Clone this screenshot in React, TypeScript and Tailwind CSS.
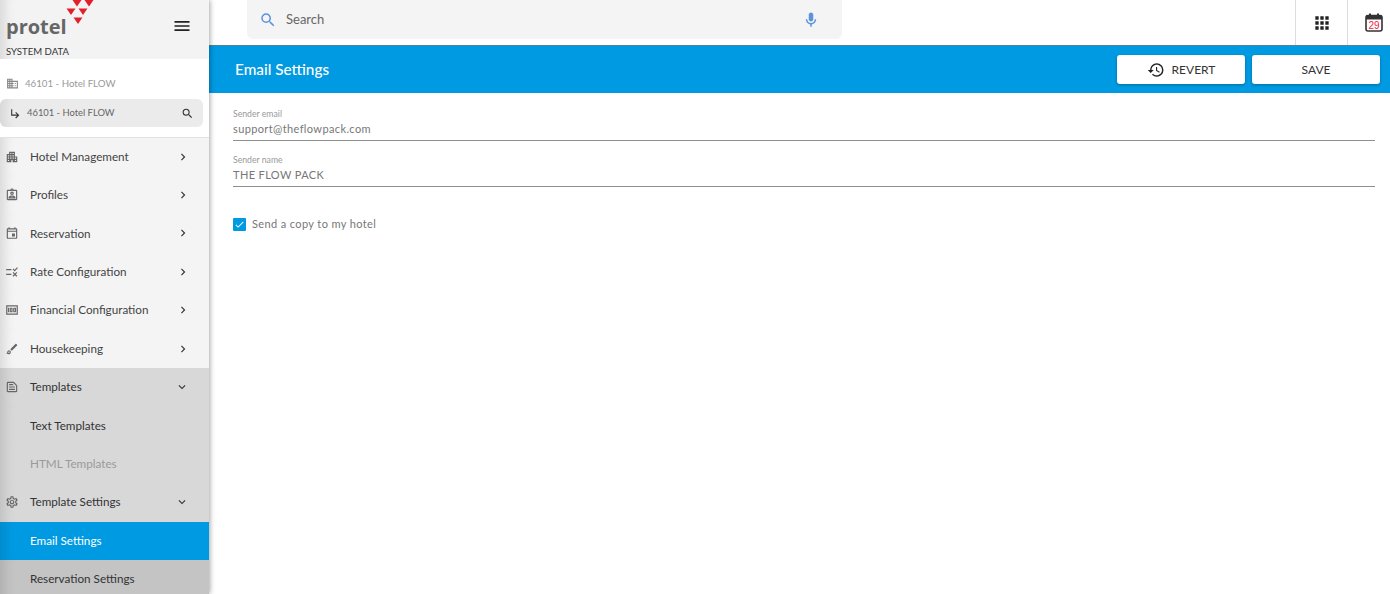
import React from "react";
import {
  MdApps,
  MdCheck,
  MdChevronRight,
  MdExpandMore,
  MdHistory,
  MdMenu,
  MdOutlineTextSnippet,
  MdOutlineAssignmentInd,
  MdOutlineBrush,
  MdOutlineDomain,
  MdOutlineEvent,
  MdOutlineMic,
  MdOutlineMoney,
  MdOutlineRule,
  MdOutlineSettings,
  MdApartment,
  MdSearch,
  MdSubdirectoryArrowRight,
} from "react-icons/md";

const navItems = [
  { label: "Hotel Management", icon: MdApartment, tone: "light", arrow: "right" },
  { label: "Profiles", icon: MdOutlineAssignmentInd, tone: "light", arrow: "right" },
  { label: "Reservation", icon: MdOutlineEvent, tone: "light", arrow: "right" },
  { label: "Rate Configuration", icon: MdOutlineRule, tone: "light", arrow: "right" },
  { label: "Financial Configuration", icon: MdOutlineMoney, tone: "light", arrow: "right" },
  { label: "Housekeeping", icon: MdOutlineBrush, tone: "light", arrow: "right" },
  { label: "Templates", icon: MdOutlineTextSnippet, tone: "open", arrow: "down" },
  { label: "Text Templates", tone: "open" },
  { label: "HTML Templates", tone: "disabled" },
  { label: "Template Settings", icon: MdOutlineSettings, tone: "open", arrow: "down" },
  { label: "Email Settings", tone: "active" },
  { label: "Reservation Settings", tone: "hover" },
];

const toneClasses: Record<string, string> = {
  light: "bg-[#f4f4f4] text-[#444]",
  open: "bg-[#d8d8d8] text-[#333]",
  disabled: "bg-[#d8d8d8] text-[#9a9a9a]",
  active: "bg-[#009ae2] text-white",
  hover: "bg-[#c4c4c4] text-[#333]",
};

function Logo() {
  return (
    <div className="relative h-[44px] w-[100px]">
      <span className="absolute left-[6px] top-[10px] font-['Open_Sans'] text-[20px] leading-[34px] font-bold text-[#666]">
        protel
      </span>
      <svg className="absolute left-[60px] top-0" width="40" height="26" viewBox="0 0 40 26" fill="#e2202c">
        <polygon points="12.5,0 21.5,0 17,6.5" />
        <polygon points="24.5,0 33.5,0 29,6.5" />
        <polygon points="6.5,8.5 15.5,8.5 11,15" />
        <polygon points="18.5,8.5 27.5,8.5 23,15" />
        <polygon points="13.5,17.5 22.5,17.5 18,24" />
      </svg>
    </div>
  );
}

function Sidebar() {
  return (
    <aside className="z-20 flex h-[594px] w-[209px] shrink-0 flex-col overflow-hidden bg-white shadow-[1px_0_5px_rgba(0,0,0,0.35)]">
      <div className="relative h-[59px] shrink-0 bg-[#f3f3f3] shadow-[inset_14px_0_12px_-10px_rgba(0,0,0,0.12)]">
        <Logo />
        <MdMenu className="absolute left-[172px] top-[16px] text-[20px] text-[#222]" />
        <div className="absolute left-[6px] top-[46px] text-[9.6px] leading-[12px] text-[#333]">SYSTEM DATA</div>
      </div>
      <div className="flex h-[79px] shrink-0 flex-col border-b border-[#e3e3e3] bg-white">
        <div className="flex h-[40px] items-center pt-[8px] pl-[6px] text-[9.7px] text-[#999]">
          <MdOutlineDomain className="mr-[6px] text-[13px] text-[#888]" />
          46101 - Hotel FLOW
        </div>
        <div className="flex h-[28px] w-[203px] items-center rounded-[6px] bg-[#ebebeb] px-[9px] text-[9.4px] text-[#666] shadow-[inset_14px_0_12px_-10px_rgba(0,0,0,0.1)]">
          <MdSubdirectoryArrowRight className="mr-[5px] text-[13px] text-[#333]" />
          <span className="flex-1">46101 - Hotel FLOW</span>
          <MdSearch className="text-[13px] text-[#333]" />
        </div>
      </div>
      <nav className="flex flex-col">
        {navItems.map((item) => {
          const Icon = item.icon;
          return (
            <div
              key={item.label}
              className={`flex h-[38.4px] shrink-0 items-center pb-[1px] text-[11.7px] shadow-[inset_14px_0_12px_-10px_rgba(0,0,0,0.12)] ${toneClasses[item.tone]}`}
            >
              <div className="flex w-[30px] shrink-0 justify-center pr-[6px]">
                {Icon && <Icon className="text-[14px] text-[#666]" />}
              </div>
              <span className="flex-1">{item.label}</span>
              {item.arrow === "right" && <MdChevronRight className="mr-[19px] text-[14px] text-[#333]" />}
              {item.arrow === "down" && <MdExpandMore className="mr-[20px] text-[14px] text-[#333]" />}
            </div>
          );
        })}
      </nav>
    </aside>
  );
}

function CalendarIcon() {
  return (
    <svg width="18" height="19" viewBox="0 0 18 19">
      <rect x="1" y="2.5" width="16" height="15.5" rx="2" fill="none" stroke="#333" strokeWidth="1.6" />
      <rect x="1" y="2.5" width="16" height="4" fill="#333" />
      <rect x="4" y="0.5" width="2" height="3" fill="#333" />
      <rect x="12" y="0.5" width="2" height="3" fill="#333" />
      <text x="9" y="15.5" textAnchor="middle" fontSize="10" fill="#f0243c" fontFamily="Liberation Sans">
        29
      </text>
    </svg>
  );
}

function TopBar() {
  return (
    <header className="z-10 flex h-[46px] shrink-0 items-start border-b border-[#4f83a0] bg-white">
      <div className="ml-[38px] flex h-[39px] w-[595px] items-center rounded-b-[6px] bg-[#f4f4f4] pr-[22px] pl-[12px]">
        <MdSearch className="text-[18px] text-[#5b93dc]" />
        <span className="ml-[9px] flex-1 text-[13px] text-[#666]">Search</span>
        <MdOutlineMic className="text-[18px] text-[#5b93dc]" />
      </div>
      <div className="ml-auto flex h-full">
        <div className="flex w-[52px] items-center justify-center border-l border-[#dcdcdc]">
          <MdApps className="text-[20px] text-[#222]" />
        </div>
        <div className="flex w-[43px] items-center justify-center border-l border-[#dcdcdc] pl-[9px]">
          <CalendarIcon />
        </div>
      </div>
    </header>
  );
}

function Field({ label, value }: { label: string; value: string }) {
  return (
    <div className="h-[46px] border-b border-[#8f8f8f] pt-[13px]">
      <div className="text-[8.7px] leading-[12px] text-[#999]">{label}</div>
      <div className="mt-[1px] text-[11px] leading-[16px] tracking-[0.38px] text-[#777]">{value}</div>
    </div>
  );
}

export default function App() {
  return (
    <div className="flex h-[594px] w-[1390px] overflow-hidden bg-white font-['Lato',sans-serif]">
      <Sidebar />
      <main className="flex min-w-0 flex-1 flex-col">
        <TopBar />
        <div className="flex h-[47px] shrink-0 items-center bg-[#009ae2] pr-[10px] pl-[26px]">
          <h1 className="flex-1 text-[15.3px] font-medium text-white">Email Settings</h1>
          <div className="flex gap-[7px]">
            <button className="flex h-[29px] w-[128px] items-center justify-center rounded-[3px] bg-white text-[12px] text-[#333] shadow-[0_1px_3px_rgba(0,0,0,0.3)]">
              <MdHistory className="mr-[7px] text-[18px] text-[#222]" />
              REVERT
            </button>
            <button className="flex h-[29px] w-[128px] items-center justify-center rounded-[3px] bg-white text-[12px] text-[#333] shadow-[0_1px_3px_rgba(0,0,0,0.3)]">
              SAVE
            </button>
          </div>
        </div>
        <section className="flex-1 pt-[2px] pr-[15px] pl-[24px]">
          <Field label="Sender email" value="support@theflowpack.com" />
          <Field label="Sender name" value="THE FLOW PACK" />
          <div className="mt-[29px] flex items-center">
            <span className="flex h-[13px] w-[13px] items-center justify-center rounded-[1px] bg-[#009ae2]">
              <MdCheck className="text-[11px] text-white" />
            </span>
            <span className="ml-[6px] text-[11px] tracking-[0.38px] text-[#777]">Send a copy to my hotel</span>
          </div>
        </section>
      </main>
    </div>
  );
}
